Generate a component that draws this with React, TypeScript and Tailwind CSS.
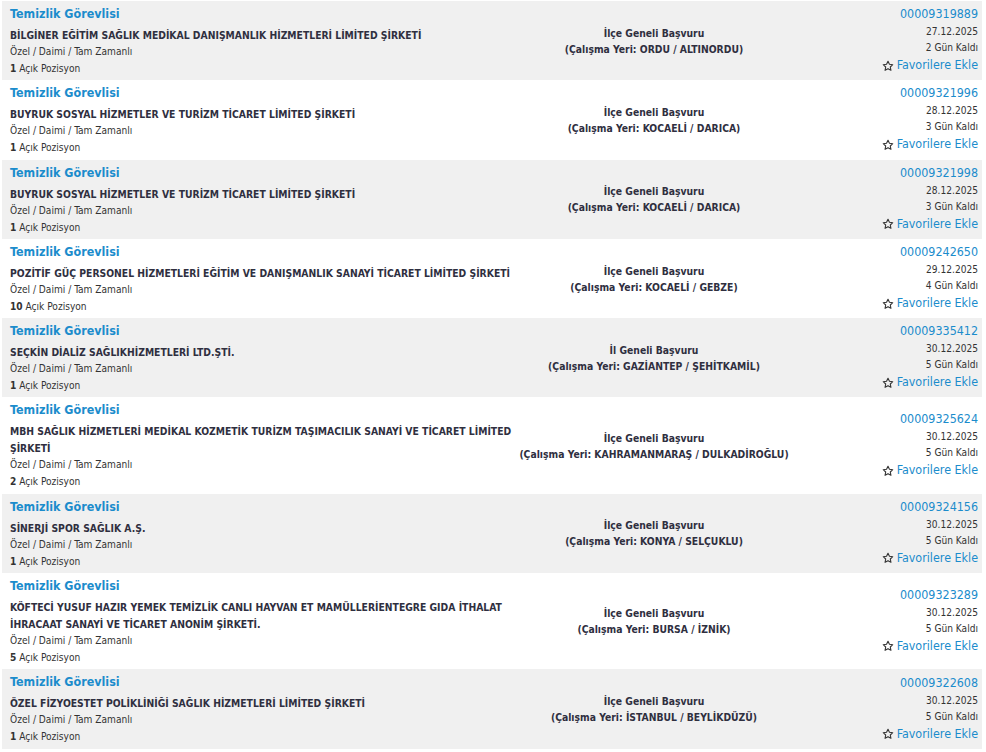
import React from "react";

type Ilan = {
  firma: string;
  sayi: number;
  basvuru: string;
  yer: string;
  no: string;
  tarih: string;
  kalan: string;
};

const ilanlar: Ilan[] = [
  { firma: "BİLGİNER EĞİTİM SAĞLIK MEDİKAL DANIŞMANLIK HİZMETLERİ LİMİTED ŞİRKETİ", sayi: 1, basvuru: "İlçe Geneli Başvuru", yer: "ORDU / ALTINORDU", no: "00009319889", tarih: "27.12.2025", kalan: "2 Gün Kaldı" },
  { firma: "BUYRUK SOSYAL HİZMETLER VE TURİZM TİCARET LİMİTED ŞİRKETİ", sayi: 1, basvuru: "İlçe Geneli Başvuru", yer: "KOCAELİ / DARICA", no: "00009321996", tarih: "28.12.2025", kalan: "3 Gün Kaldı" },
  { firma: "BUYRUK SOSYAL HİZMETLER VE TURİZM TİCARET LİMİTED ŞİRKETİ", sayi: 1, basvuru: "İlçe Geneli Başvuru", yer: "KOCAELİ / DARICA", no: "00009321998", tarih: "28.12.2025", kalan: "3 Gün Kaldı" },
  { firma: "POZİTİF GÜÇ PERSONEL HİZMETLERİ EĞİTİM VE DANIŞMANLIK SANAYİ TİCARET LİMİTED ŞİRKETİ", sayi: 10, basvuru: "İlçe Geneli Başvuru", yer: "KOCAELİ / GEBZE", no: "00009242650", tarih: "29.12.2025", kalan: "4 Gün Kaldı" },
  { firma: "SEÇKİN DİALİZ SAĞLIKHİZMETLERİ LTD.ŞTİ.", sayi: 1, basvuru: "İl Geneli Başvuru", yer: "GAZİANTEP / ŞEHİTKAMİL", no: "00009335412", tarih: "30.12.2025", kalan: "5 Gün Kaldı" },
  { firma: "MBH SAĞLIK HİZMETLERİ MEDİKAL KOZMETİK TURİZM TAŞIMACILIK SANAYİ VE TİCARET LİMİTED ŞİRKETİ", sayi: 2, basvuru: "İlçe Geneli Başvuru", yer: "KAHRAMANMARAŞ / DULKADİROĞLU", no: "00009325624", tarih: "30.12.2025", kalan: "5 Gün Kaldı" },
  { firma: "SİNERJİ SPOR SAĞLIK A.Ş.", sayi: 1, basvuru: "İlçe Geneli Başvuru", yer: "KONYA / SELÇUKLU", no: "00009324156", tarih: "30.12.2025", kalan: "5 Gün Kaldı" },
  { firma: "KÖFTECİ YUSUF HAZIR YEMEK TEMİZLİK CANLI HAYVAN ET MAMÜLLERİENTEGRE GIDA İTHALAT İHRACAAT SANAYİ VE TİCARET ANONİM ŞİRKETİ.", sayi: 5, basvuru: "İlçe Geneli Başvuru", yer: "BURSA / İZNİK", no: "00009323289", tarih: "30.12.2025", kalan: "5 Gün Kaldı" },
  { firma: "ÖZEL FİZYOESTET POLİKLİNİĞİ SAĞLIK HİZMETLERİ LİMİTED ŞİRKETİ", sayi: 1, basvuru: "İlçe Geneli Başvuru", yer: "İSTANBUL / BEYLİKDÜZÜ", no: "00009322608", tarih: "30.12.2025", kalan: "5 Gün Kaldı" },
];

function Star() {
  return (
    <svg width="12" height="12" viewBox="0 0 24 24" fill="none" stroke="#333" strokeWidth="2.2" strokeLinejoin="round" className="mr-[3px] mt-[1px]">
      <path d="M12 2.5l2.9 6.1 6.6.8-4.9 4.6 1.3 6.6L12 17.3l-5.9 3.3 1.3-6.6-4.9-4.6 6.6-.8z" />
    </svg>
  );
}

function IlanSatiri({ ilan, gri }: { ilan: Ilan; gri: boolean }) {
  return (
    <div className={`flex ${gri ? "bg-[#f0f0f0]" : "bg-white"}`}>
      <div className="w-[516px] shrink-0 pl-[8px] pr-[4px] pt-[3px] pb-[3.3px]">
        <div className="text-[12.4px] font-bold leading-[20px] text-[#1b8ccc]">Temizlik Görevlisi</div>
        <div className="mt-[3px] text-[10.3px] font-bold leading-[17px] text-[#2f2f3f]">{ilan.firma}</div>
        <div className="text-[10.1px] leading-[16px] text-[#333]">Özel / Daimi / Tam Zamanlı</div>
        <div className="text-[10.1px] leading-[17px] text-[#333]">
          <span className="font-bold">{ilan.sayi}</span> Açık Pozisyon
        </div>
      </div>
      <div className="flex w-[272px] shrink-0 flex-col items-center justify-center whitespace-nowrap text-center text-[10.3px] font-bold leading-[16px] text-[#2f2f3f]">
        <div>{ilan.basvuru}</div>
        <div>(Çalışma Yeri: {ilan.yer})</div>
      </div>
      <div className="flex flex-1 flex-col items-end justify-center pr-[4px] text-right">
        <div className="text-[12.4px] leading-[18px] text-[#1b8ccc] -mt-[2px]">{ilan.no}</div>
        <div className="text-[10.1px] leading-[16px] mt-[1px] text-[#333]">{ilan.tarih}</div>
        <div className="text-[10.1px] leading-[16px] text-[#333]">{ilan.kalan}</div>
        <div className="flex items-center text-[12.4px] leading-[18px] text-[#1b8ccc]">
          <Star />
          Favorilere Ekle
        </div>
      </div>
    </div>
  );
}

export default function App() {
  return (
    <div className="min-h-screen bg-white px-[2px] pt-[1px]" style={{ fontFamily: '"DejaVu Sans Condensed", "DejaVu Sans", sans-serif' }}>
      <div className="w-[980px]">
        {ilanlar.map((ilan, i) => (
          <IlanSatiri key={ilan.no} ilan={ilan} gri={i % 2 === 0} />
        ))}
      </div>
    </div>
  );
}
